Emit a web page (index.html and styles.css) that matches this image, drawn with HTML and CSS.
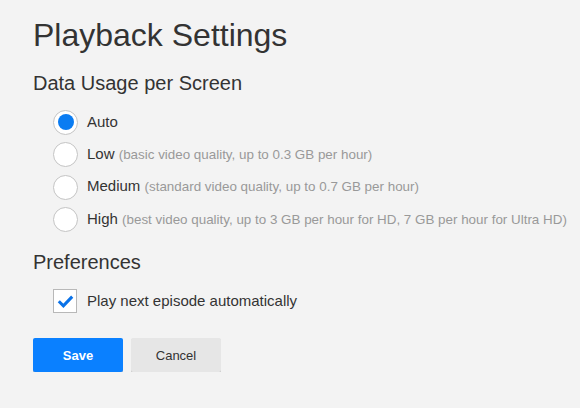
FILE: index.html
```html
<!DOCTYPE html>
<html lang="en">
<head>
<meta charset="utf-8">
<title>Playback Settings</title>
<link rel="stylesheet" href="styles.css">
</head>
<body>
<main class="page">
  <h1 class="title">Playback Settings</h1>
  <h2 class="section-title">Data Usage per Screen</h2>
  <ul class="options">
    <li class="option"><span class="radio checked"></span><span class="label">Auto</span></li>
    <li class="option"><span class="radio"></span><span class="label">Low <span class="desc">(basic video quality, up to 0.3 GB per hour)</span></span></li>
    <li class="option"><span class="radio"></span><span class="label">Medium <span class="desc">(standard video quality, up to 0.7 GB per hour)</span></span></li>
    <li class="option"><span class="radio"></span><span class="label">High <span class="desc">(best video quality, up to 3 GB per hour for HD, 7 GB per hour for Ultra HD)</span></span></li>
  </ul>
  <h2 class="section-title prefs">Preferences</h2>
  <div class="check-row">
    <span class="checkbox"><svg width="24" height="24" viewBox="0 0 24 24"><path d="M5.8 12.2 L10.4 16.8 L19.2 7.6" fill="none" stroke="#0a72e8" stroke-width="3"/></svg></span>
    <span class="label">Play next episode automatically</span>
  </div>
  <div class="actions">
    <button class="btn btn-primary">Save</button>
    <button class="btn btn-secondary">Cancel</button>
  </div>
</main>
</body>
</html>
```

FILE: styles.css
```css
html, body {
  margin: 0;
  padding: 0;
  background: #f3f3f3;
}
body {
  font-family: "Liberation Sans", Arial, sans-serif;
  color: #333;
}
.page {
  padding: 17px 0 0 33px;
}
.title {
  margin: 0;
  font-size: 32px;
  line-height: 36px;
  font-weight: normal;
  color: #333;
}
.section-title {
  margin: 18px 0 0 0;
  font-size: 20px;
  line-height: 24px;
  font-weight: normal;
  color: #333;
}
.section-title.prefs {
  margin-top: 18px;
}
.options {
  list-style: none;
  margin: 14.5px 0 0 0;
  padding: 0 0 0 20px;
  display: flex;
  flex-direction: column;
  gap: 7.5px;
}
.option {
  display: flex;
  align-items: center;
  height: 25px;
}
.radio {
  box-sizing: border-box;
  width: 25px;
  height: 25px;
  border-radius: 50%;
  background: #fff;
  border: 1px solid #c4c4c4;
  display: flex;
  align-items: center;
  justify-content: center;
  flex-shrink: 0;
}
.radio.checked::after {
  content: "";
  width: 16px;
  height: 16px;
  border-radius: 50%;
  background: #0a7cf2;
}
.label {
  margin-left: 9px;
  font-size: 15px;
  line-height: 17px;
  font-weight: 400;
  color: #333;
  white-space: nowrap;
  position: relative;
  top: -1px;
}
.desc {
  font-size: 13.4px;
  font-weight: 400;
  color: #999;
}
.check-row {
  margin: 15px 0 0 20px;
  display: flex;
  align-items: center;
}
.checkbox {
  box-sizing: border-box;
  width: 24px;
  height: 24px;
  background: #fff;
  border: 1px solid #b8b8b8;
  display: flex;
  align-items: center;
  justify-content: center;
}
.checkbox svg {
  display: block;
  flex-shrink: 0;
}
.check-row .label {
  margin-left: 10px;
}
.actions {
  margin-top: 25px;
  display: flex;
  gap: 8px;
}
.btn {
  box-sizing: border-box;
  width: 90px;
  height: 34px;
  border: 0;
  border-radius: 2px;
  font-family: "Liberation Sans", Arial, sans-serif;
  font-size: 13px;
  padding: 0;
  box-shadow: 0 1px 0 rgba(0, 0, 0, 0.2);
}
.btn-primary {
  background: #0a80ff;
  color: #fff;
  font-weight: bold;
}
.btn-secondary {
  background: #e6e6e6;
  color: #333;
}
```
